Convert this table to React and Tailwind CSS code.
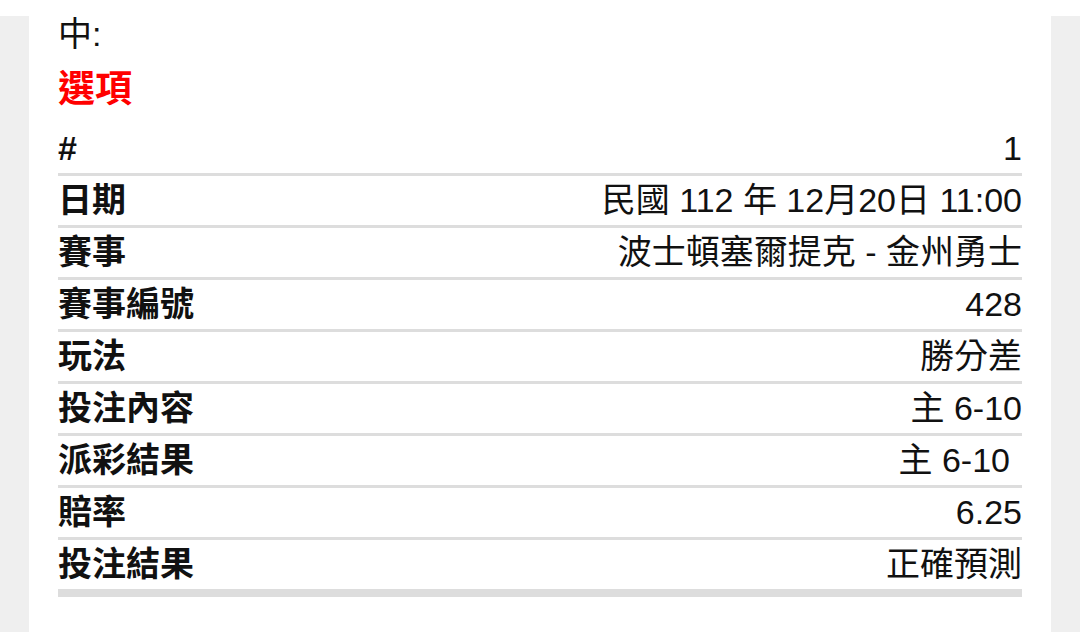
import React from "react";

const rows = [
  ["#", "1"],
  ["日期", "民國 112 年 12月20日 11:00"],
  ["賽事", "波士頓塞爾提克 - 金州勇士"],
  ["賽事編號", "428"],
  ["玩法", "勝分差"],
  ["投注內容", "主 6-10"],
  ["派彩結果", "主 6-10", true],
  ["賠率", "6.25"],
  ["投注結果", "正確預測"],
];

export default function App() {
  return (
    <div
      className="w-[1080px] h-[632px] overflow-hidden bg-white text-[#111]"
      style={{ fontFamily: '"Liberation Sans", "Noto Sans CJK TC", sans-serif' }}
    >
      <div className="h-4 bg-white" />
      <div className="flex h-[616px]">
        <div className="w-[29px] bg-[#efefef]" />
        <div className="flex-1 bg-white px-[29px]">
          <div className="text-[34px] leading-[36px]">中:</div>
          <div className="mt-4 text-[37px] leading-[44px] font-bold text-[#f00]">選項</div>
          <div className="mt-3">
            {rows.map(([label, value, pad], i) => (
              <div
                key={label}
                className={`flex h-[52px] items-center justify-between border-[#dddddd] ${
                  i === rows.length - 1 ? "h-[57px] border-b-[8px]" : "border-b-[3px]"
                }`}
              >
                <span className="text-[34px] font-bold">{label}</span>
                <span className={`text-[34px] ${pad ? "pr-3" : ""}`}>{value}</span>
              </div>
            ))}
          </div>
        </div>
        <div className="w-[29px] bg-[#efefef]" />
      </div>
    </div>
  );
}
